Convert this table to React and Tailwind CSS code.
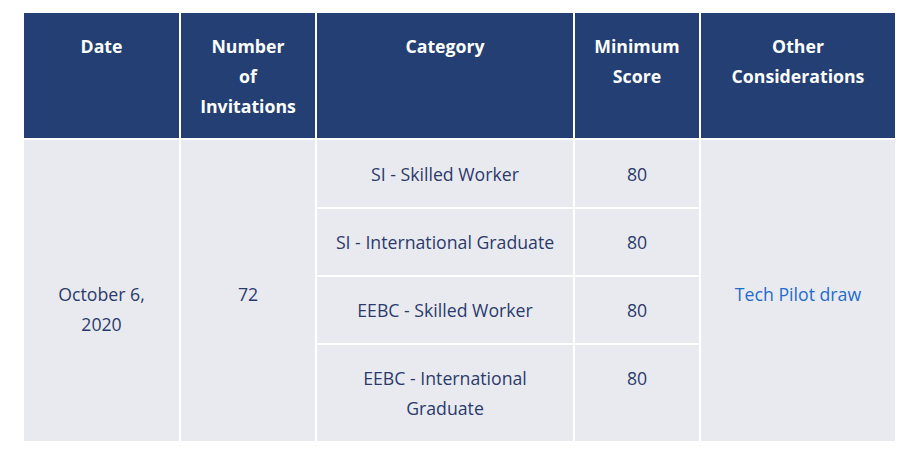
import React from "react";

const rows = [
  { category: "SI - Skilled Worker", score: "80", h: "h-[67px] pt-[19px]" },
  { category: "SI - International Graduate", score: "80", h: "h-[66px] pt-[18px]" },
  { category: "EEBC - Skilled Worker", score: "80", h: "h-[66px] pt-[18px]" },
  { category: "EEBC - International Graduate", score: "80", h: "h-[96px] pt-[18px]" },
];

const headers = [
  ["Date"],
  ["Number", "of", "Invitations"],
  ["Category"],
  ["Minimum Score"],
  ["Other Considerations"],
];

export default function App() {
  return (
    <div className="min-h-[462px] bg-white pt-[13px] pl-[24px] font-['Open_Sans',sans-serif] text-[17.7px] leading-[30px]">
      <div className="flex w-[871px] flex-col gap-[2px]">
        <div className="grid grid-cols-[155px_134px_256px_124px_194px] gap-[2px]">
          {headers.map((h) => (
            <div
              key={h.join(" ")}
              className="flex h-[125px] flex-col items-center bg-[#243f73] px-[18px] pt-[18px] text-center font-bold text-white"
            >
              {h.map((line) => (
                <span key={line}>{line}</span>
              ))}
            </div>
          ))}
        </div>

        <div className="grid grid-cols-[155px_134px_382px_194px] gap-[2px]">
          <div className="bg-[#e9eaf0] px-[18px] pt-[139px] text-center text-[#2b3a6b]">
            October 6, 2020
          </div>
          <div className="bg-[#e9eaf0] px-[18px] pt-[139px] text-center text-[#2b3a6b]">
            72
          </div>
          <div className="grid grid-cols-[256px_124px] gap-[2px]">
            {rows.map((r) => (
              <React.Fragment key={r.category}>
                <div className={`${r.h} bg-[#e9eaf0] px-[18px] text-center text-[#2b3a6b]`}>
                  {r.category}
                </div>
                <div className={`${r.h} bg-[#e9eaf0] px-[18px] text-center text-[#2b3a6b]`}>
                  {r.score}
                </div>
              </React.Fragment>
            ))}
          </div>
          <div className="bg-[#e9eaf0] px-[18px] pt-[139px] text-center text-[#1d6dcc]">
            Tech Pilot draw
          </div>
        </div>
      </div>
    </div>
  );
}
